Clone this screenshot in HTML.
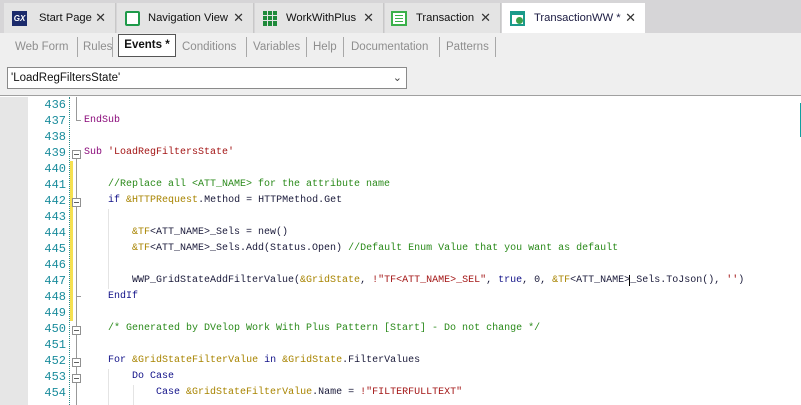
<!DOCTYPE html>
<html><head><style>
*{margin:0;padding:0;box-sizing:border-box}
body{width:801px;height:405px;overflow:hidden;background:#fff;font-family:"Liberation Sans",sans-serif;position:relative}
.tb{position:absolute;left:0;top:0;width:801px;height:33px;background:#d6d5d7}
.tab{position:absolute;top:3px;height:30px;background:#e4e4e4;border-right:1px solid #c8c8c8;font-size:11.2px;color:#111;line-height:30px}
.tab .ic{position:absolute;left:8px;top:8px;width:15px;height:15px}
.tab .t{position:absolute;left:33px}
.tab .x{position:absolute;right:9px;font-size:13px;color:#333}
.sub{position:absolute;left:0;top:33px;width:801px;height:63px;background:#efefef;border-bottom:1px solid #a0a0a0}
.st{position:absolute;top:6px;font-size:11.5px;color:#8e8e8e;line-height:16px}
.sep{position:absolute;top:4px;width:1px;height:20px;background:#a8a8a8}
.dd{position:absolute;left:7px;top:34px;width:400px;height:22px;background:#fff;border:1px solid #8a8a8a;font-size:11.5px;line-height:20px;padding-left:3px;color:#111}
.gut{position:absolute;left:0;top:97px;width:28px;height:308px;background:#e6e6e6}
.ln{position:absolute;left:28px;width:38px;text-align:right;font-family:"Liberation Mono",monospace;font-size:12px;color:#1a8c9c;height:16px;line-height:16px}
.code{position:absolute;left:84px;font-family:"Liberation Mono",monospace;font-size:10px;white-space:pre;height:16px;line-height:16px;color:#1a1a3a}
.k{color:#111188}.p{color:#8a0a7a}.v{color:#a88400}.s{color:#a31515}.c{color:#2a8a1a}
.fb{position:absolute;left:72px;width:9px;height:9px;border:1px solid #909090;background:#fff}
.fb:after{content:"";position:absolute;left:1px;top:3px;width:5px;height:1px;background:#606060}
.cur{border-left:1px solid #000;margin-left:-1px}
</style></head><body>
<div class="tb">
 <div class="tab" style="left:4px;width:112px"><div class="ic" style="background:#1b2a6b;color:#fff;font-size:8px;font-weight:bold;font-style:italic;line-height:15px;text-align:center">GX</div><span class="t" style="left:35px">Start Page</span><span class="x">✕</span></div>
 <div class="tab" style="left:117px;width:137px"><div class="ic" style="border:2px solid #1f9a4a;border-radius:2px;background:#fff"></div><span class="t" style="left:31px">Navigation View</span><span class="x">✕</span></div>
 <div class="tab" style="left:255px;width:129px"><div class="ic" style="background:repeating-linear-gradient(90deg,#1e8a3a 0 4px,#e4e4e4 4px 5px),#1e8a3a"><div style="position:absolute;left:0;top:4px;width:15px;height:1px;background:#e4e4e4"></div><div style="position:absolute;left:0;top:9px;width:15px;height:1px;background:#e4e4e4"></div></div><span class="t" style="left:31px">WorkWithPlus</span><span class="x">✕</span></div>
 <div class="tab" style="left:385px;width:116px"><div class="ic" style="left:6px;border:2px solid #3ab04a;background:#fff;width:16px"><div style="margin:2px;height:1px;background:#3ab04a;box-shadow:0 3px #3ab04a,0 6px #3ab04a"></div></div><span class="t" style="left:31px">Transaction</span><span class="x">✕</span></div>
 <div class="tab" style="left:502px;width:143px;background:#fff;border:none"><div class="ic" style="border:2px solid #1a9a8a;border-top-width:4px;background:#fff"><div style="position:absolute;right:0;bottom:0;width:7px;height:7px;border-radius:50%;background:#3aa04a"></div></div><span class="t" style="left:32px;color:#1a1a40">TransactionWW *</span><span class="x">✕</span></div>
</div>
<div class="sub">
 <span class="st" style="left:15px">Web Form</span><div class="sep" style="left:77px"></div>
 <span class="st" style="left:83px">Rules</span><div class="sep" style="left:112px"></div>
 <div style="position:absolute;left:118px;top:1px;width:58px;height:23px;border:1px solid #555;background:#fff;font-size:11.5px;font-weight:bold;line-height:21px;text-align:center;color:#111">Events *</div>
 <span class="st" style="left:182px">Conditions</span><div class="sep" style="left:246px"></div>
 <span class="st" style="left:253px">Variables</span><div class="sep" style="left:306px"></div>
 <span class="st" style="left:313px">Help</span><div class="sep" style="left:343px"></div>
 <span class="st" style="left:351px">Documentation</span><div class="sep" style="left:439px"></div>
 <span class="st" style="left:446px">Patterns</span><div class="sep" style="left:495px"></div>
 <div class="dd">'LoadRegFiltersState'<span style="position:absolute;right:4px;top:0;font-size:11px;color:#444">&#8964;</span></div>
</div>
<div class="gut"></div>
<div style="position:absolute;left:69px;top:97px;height:308px;border-left:1px dotted #2a8a8a"></div>
<div style="position:absolute;left:70px;top:161px;width:3px;height:160px;background:#f5e050"></div>
<div style="position:absolute;left:76px;top:97px;width:1px;height:24px;background:#999"></div>
<div style="position:absolute;left:76px;top:120px;width:5px;height:1px;background:#999"></div>
<div style="position:absolute;left:76px;top:156px;width:1px;height:249px;background:#999"></div>
<div style="position:absolute;left:76px;top:296px;width:5px;height:1px;background:#999"></div>
<div style="position:absolute;left:800px;top:103px;width:1px;height:34px;background:#10a0a0"></div>
<div class="fb" style="top:150px"></div>
<div class="fb" style="top:198px"></div>
<div class="fb" style="top:326px"></div>
<div class="fb" style="top:358px"></div>
<div class="fb" style="top:374px"></div>
<div style="position:absolute;left:108px;top:209px;width:1px;height:80px;background:#e4e4e4"></div>
<div style="position:absolute;left:108px;top:369px;width:1px;height:36px;background:#e4e4e4"></div>
<div style="position:absolute;left:133px;top:385px;width:1px;height:20px;background:#e4e4e4"></div>

<div class="ln" style="top:97px">436</div>
<div class="ln" style="top:113px">437</div><div class="code p" style="top:113px">EndSub</div>
<div class="ln" style="top:129px">438</div>
<div class="ln" style="top:145px">439</div><div class="code" style="top:145px"><span class="p">Sub</span> <span class="s">'LoadRegFiltersState'</span></div>
<div class="ln" style="top:161px">440</div>
<div class="ln" style="top:177px">441</div><div class="code c" style="top:177px">    //Replace all &lt;ATT_NAME&gt; for the attribute name</div>
<div class="ln" style="top:193px">442</div><div class="code" style="top:193px">    <span class="k">if</span> <span class="v">&amp;HTTPRequest</span>.Method = HTTPMethod.Get</div>
<div class="ln" style="top:209px">443</div>
<div class="ln" style="top:225px">444</div><div class="code" style="top:225px">        <span class="v">&amp;TF</span>&lt;ATT_NAME&gt;_Sels = new()</div>
<div class="ln" style="top:241px">445</div><div class="code" style="top:241px">        <span class="v">&amp;TF</span>&lt;ATT_NAME&gt;_Sels.Add(Status.Open) <span class="c">//Default Enum Value that you want as default</span></div>
<div class="ln" style="top:257px">446</div>
<div class="ln" style="top:273px">447</div><div class="code" style="top:273px">        WWP_GridStateAddFilterValue(<span class="v">&amp;GridState</span>, <span class="s">!"TF&lt;ATT_NAME&gt;_SEL"</span>, <span class="k">true</span>, 0, <span class="v">&amp;TF</span>&lt;ATT_NAME&gt;<span class="cur">_</span>Sels.ToJson(), <span class="s">''</span>)</div>
<div class="ln" style="top:289px">448</div><div class="code k" style="top:289px">    EndIf</div>
<div class="ln" style="top:305px">449</div>
<div class="ln" style="top:321px">450</div><div class="code c" style="top:321px">    /* Generated by DVelop Work With Plus Pattern [Start] - Do not change */</div>
<div class="ln" style="top:337px">451</div>
<div class="ln" style="top:353px">452</div><div class="code" style="top:353px">    <span class="k">For</span> <span class="v">&amp;GridStateFilterValue</span> <span class="k">in</span> <span class="v">&amp;GridState</span>.FilterValues</div>
<div class="ln" style="top:369px">453</div><div class="code k" style="top:369px">        Do Case</div>
<div class="ln" style="top:385px">454</div><div class="code" style="top:385px">            <span class="k">Case</span> <span class="v">&amp;GridStateFilterValue</span>.Name = <span class="s">!"FILTERFULLTEXT"</span></div>
</body></html>
